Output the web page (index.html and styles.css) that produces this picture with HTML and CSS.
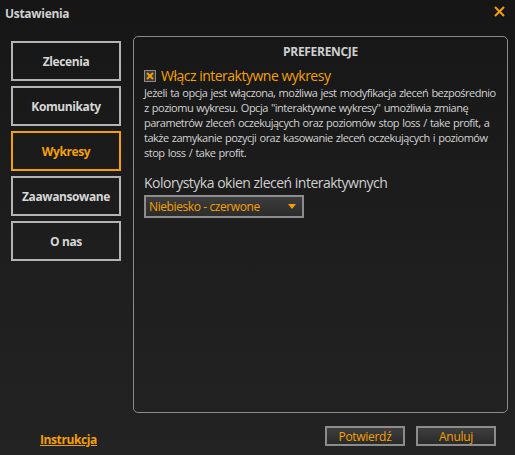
FILE: index.html
```html
<!DOCTYPE html>
<html lang="pl">
<head>
<meta charset="utf-8">
<title>Ustawienia</title>
<link rel="stylesheet" href="styles.css">
</head>
<body>
<div class="window">
  <header class="titlebar">
    <span class="title">Ustawienia</span>
    <svg class="close" width="11" height="11" viewBox="0 0 11 11"><path d="M1 1 L10 10 M10 1 L1 10" stroke="#f5a000" stroke-width="2" fill="none"/></svg>
  </header>
  <div class="main">
    <nav class="tabs">
      <div class="tab">Zlecenia</div>
      <div class="tab">Komunikaty</div>
      <div class="tab active">Wykresy</div>
      <div class="tab">Zaawansowane</div>
      <div class="tab">O nas</div>
    </nav>
    <section class="panel">
      <h2 class="panel-title">PREFERENCJE</h2>
      <label class="check-row">
        <span class="checkbox"><svg width="8" height="8" viewBox="0 0 8 8"><path d="M1 1 L7 7 M7 1 L1 7" stroke="#f5a000" stroke-width="2" fill="none"/></svg></span>
        <span class="check-label">Włącz interaktywne wykresy</span>
      </label>
      <p class="desc">Jeżeli ta opcja jest włączona, możliwa jest modyfikacja zleceń bezpośrednio z poziomu wykresu. Opcja "interaktywne wykresy" umożliwia zmianę parametrów zleceń oczekujących oraz poziomów stop loss / take profit, a także zamykanie pozycji oraz kasowanie zleceń oczekujących i poziomów stop loss / take profit.</p>
      <div class="field-label">Kolorystyka okien zleceń interaktywnych</div>
      <div class="select">
        <span>Niebiesko - czerwone</span>
        <svg width="8" height="5" viewBox="0 0 8 5"><path d="M0 0 H8 L4 5 Z" fill="#f5a000"/></svg>
      </div>
    </section>
  </div>
  <footer class="footer">
    <a class="help" href="#">Instrukcja</a>
    <div class="buttons">
      <button class="btn">Potwierdź</button>
      <button class="btn">Anuluj</button>
    </div>
  </footer>
</div>
</body>
</html>
```
FILE: styles.css
```css
* { box-sizing: border-box; }
html, body { margin: 0; padding: 0; }
body {
  width: 515px;
  height: 455px;
  overflow: hidden;
  font-family: "Segoe UI", "Open Sans", "Noto Sans", sans-serif;
  background: linear-gradient(to bottom, #161616 0%, #1c1c1c 40%, #232323 100%);
  color: #cfcfcf;
}
.window { display: flex; flex-direction: column; height: 455px; }
.titlebar {
  height: 28px;
  display: flex;
  align-items: center;
  justify-content: space-between;
  padding: 0 10px 2px 5px;
}
.title { font-weight: bold; font-size: 12px; color: #d0d0d0; letter-spacing: -0.3px; }
.close { margin-top: -3px; }
.main {
  display: flex;
  padding: 10px 7px 0 11px;
  gap: 12px;
  height: 385px;
}
.tabs { display: flex; flex-direction: column; gap: 5px; padding-top: 3px; }
.tab {
  width: 110px;
  height: 40px;
  border: 2px solid #b4b4b4;
  display: flex;
  align-items: center;
  justify-content: center;
  font-weight: bold;
  font-size: 12px;
  color: #d6d6d6;
  letter-spacing: -0.4px;
}
.tab.active { border-color: #f5a000; color: #f5a000; }
.panel {
  flex: 1;
  border: 1px solid #8a8a8a;
  border-radius: 5px;
  padding: 7px 10px 0 10px;
  margin-top: -2px;
}
.panel-title {
  margin: 0;
  text-align: center;
  font-size: 12px;
  font-weight: bold;
  color: #cfcfcf;
  line-height: 16px;
  letter-spacing: -0.3px;
}
.check-row { display: flex; align-items: center; gap: 5px; margin-top: 7px; }
.checkbox {
  width: 12px; height: 12px;
  border: 1px solid #8c8c8c;
  background: #3a3a3a;
  display: flex; align-items: center; justify-content: center;
}
.check-label { color: #f5a000; font-size: 14px; line-height: 17px; letter-spacing: -0.5px; }
.desc {
  margin: 1px 0 0 0;
  font-size: 11px;
  line-height: 15px;
  color: #d2d2d2;
  letter-spacing: -0.5px;
  word-spacing: 0.8px;
}
.field-label { margin-top: 14px; font-size: 14px; line-height: 18px; color: #cfcfcf; letter-spacing: -0.5px; }
.select {
  margin-top: 3px;
  width: 160px;
  height: 23px;
  border: 2px solid #8c8c8c;
  background: linear-gradient(to bottom, #3c3c3c, #2c2c2c);
  display: flex;
  align-items: center;
  justify-content: space-between;
  padding: 0 6px 0 3px;
  font-size: 12px;
  letter-spacing: -0.4px;
  color: #f5a000;
}
.footer {
  display: flex;
  align-items: flex-start;
  justify-content: space-between;
  padding: 13px 19px 0 40px;
}
.help { color: #f5a000; font-weight: bold; font-size: 12px; text-decoration: underline; margin-top: 5px; letter-spacing: -0.4px; }
.buttons { display: flex; gap: 11px; }
.btn {
  width: 80px;
  height: 20px;
  border: 2px solid #8c8c8c;
  background: linear-gradient(to bottom, #3e3e3e, #2a2a2a);
  color: #f5a000;
  font-family: inherit;
  font-size: 12px;
  letter-spacing: -0.3px;
  padding: 0;
}
```
